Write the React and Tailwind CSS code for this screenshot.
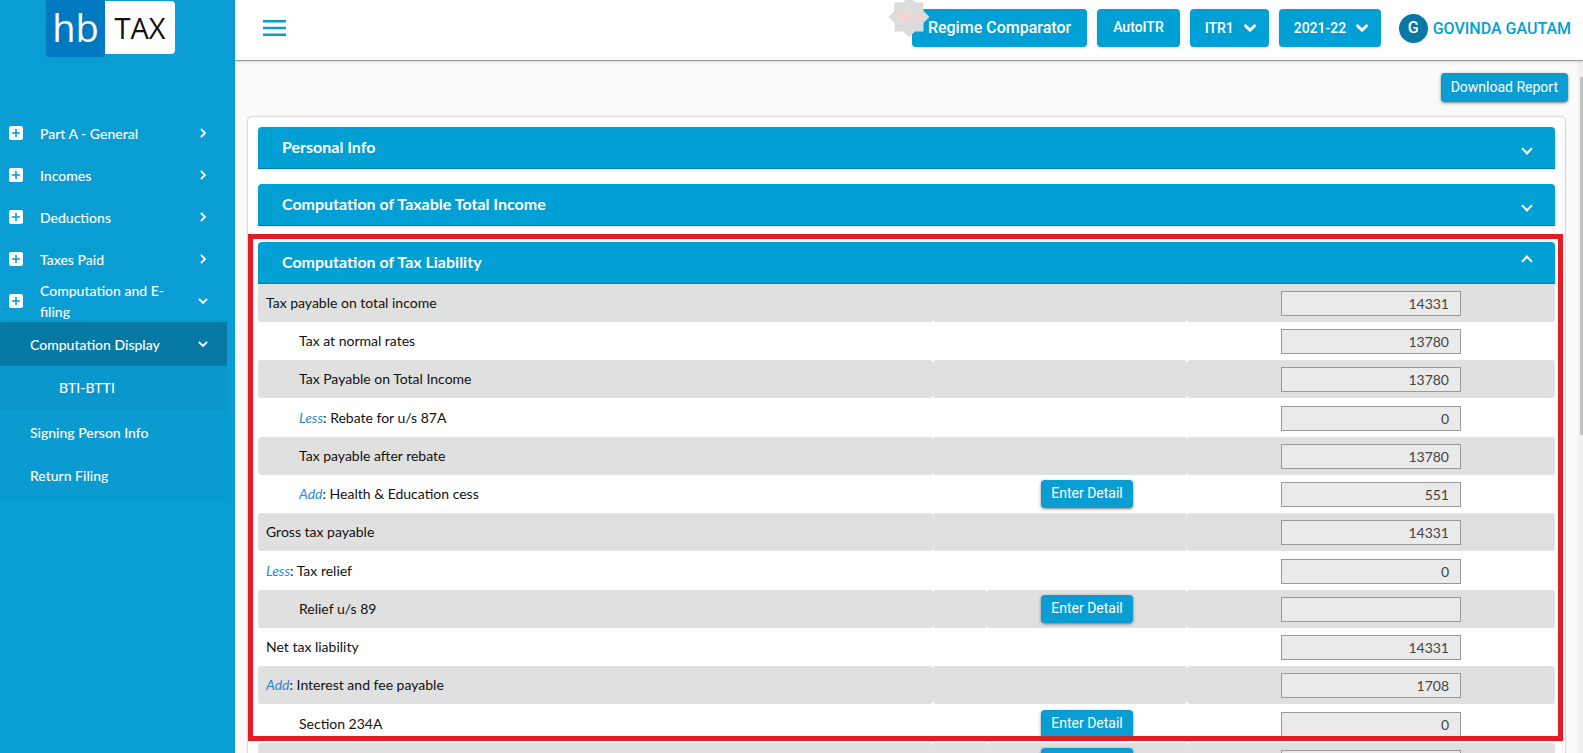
import { useState } from "react";
import { ChevronDown } from "lucide-react";

const menu = [
  { label: "Part A - General" },
  { label: "Incomes" },
  { label: "Deductions" },
  { label: "Taxes Paid" },
  { label: "Computation and E-filing", open: true },
];

const rows = [
  { id: "total", label: "Tax payable on total income", value: "14331" },
  { id: "normal", label: "Tax at normal rates", value: "13780", indent: true },
  { id: "payable", label: "Tax Payable on Total Income", value: "13780", indent: true },
  { id: "rebate", prefix: "Less", label: "Rebate for u/s 87A", value: "0", indent: true },
  { id: "after", label: "Tax payable after rebate", value: "13780", indent: true },
  { id: "cess", prefix: "Add", label: "Health & Education cess", value: "551", indent: true, detail: true },
  { id: "gross", label: "Gross tax payable", value: "14331" },
  { id: "relief", prefix: "Less", label: "Tax relief", value: "0" },
  { id: "relief89", label: "Relief u/s 89", value: "", indent: true, detail: true },
  { id: "net", label: "Net tax liability", value: "14331" },
  { id: "interest", prefix: "Add", label: "Interest and fee payable", value: "1708" },
  { id: "s234a", label: "Section 234A", value: "0", indent: true, detail: true },
  { id: "s234b", label: "Section 234B", value: "0", indent: true, detail: true },
];

function PlusBox() {
  return (
    <svg viewBox="0 0 14 14" className="size-3.5 shrink-0" aria-hidden="true">
      <rect width="14" height="14" rx="2" fill="#fff" />
      <path d="M7 3v8M3 7h8" stroke="#0a9dd3" strokeWidth="1.6" />
    </svg>
  );
}

function MenuChevron({ open }) {
  return (
    <svg
      viewBox="0 0 10 10"
      className="size-2.5 shrink-0"
      fill="none"
      stroke="currentColor"
      strokeWidth="1.8"
      aria-hidden="true"
    >
      <path d={open ? "M1 3l4 4 4-4" : "M3 1l4 4-4 4"} />
    </svg>
  );
}

function Logo() {
  return (
    <div className="ml-[46px] flex h-[57px] items-start">
      <div className="flex h-[57px] w-[59px] items-center justify-center rounded-bl-xs bg-[#0079c1] pb-1 font-['Open_Sans',sans-serif] text-[38px] leading-none font-medium text-white">
        hb
      </div>
      <div className="mt-px flex h-[53px] w-[70px] items-center justify-center rounded-r-sm bg-white pb-px font-['Open_Sans',sans-serif] text-[29px] leading-none text-[#111]">
        TAX
      </div>
    </div>
  );
}

function Sidebar() {
  return (
    <aside className="w-[235px] shrink-0 bg-[#0a9dd3] text-white">
      <Logo />
      <nav className="mt-[55px] w-[227px] text-sm leading-[21px] font-medium">
        {menu.map((item) => (
          <a
            key={item.label}
            href="#"
            className="flex h-[42px] items-center pr-[19px] pl-[9px]"
          >
            <PlusBox />
            <span className="ml-[17px] flex-1 pr-6">{item.label}</span>
            <MenuChevron open={item.open} />
          </a>
        ))}
        <a
          href="#"
          className="flex h-11 items-center justify-between bg-[#0779a3] pr-[19px] pl-[30px]"
        >
          Computation Display
          <MenuChevron open />
        </a>
        <a
          href="#"
          className="flex h-11 items-center border-b border-[#0a92c5] bg-[#0a97cc] pl-[59px]"
        >
          BTI-BTTI
        </a>
        <a href="#" className="flex h-11 items-center bg-[#0a9bd0] pl-[30px]">
          Signing Person Info
        </a>
        <a
          href="#"
          className="flex h-11 items-center border-b border-[#0a92c5] bg-[#0a9bd0] pl-[30px]"
        >
          Return Filing
        </a>
      </nav>
    </aside>
  );
}

function HeaderSelect({ label, value }) {
  return (
    <div className="relative">
      <select
        aria-label={label}
        defaultValue={value}
        className="h-[38px] appearance-none rounded-sm bg-[#00a0d4] pr-[34px] pl-[15px] text-sm font-medium text-white shadow-sm"
      >
        <option>{value}</option>
      </select>
      <ChevronDown
        strokeWidth={4}
        className="pointer-events-none absolute top-2.5 right-2.5 size-[18px] text-white"
      />
    </div>
  );
}

function NewBadge() {
  return (
    <svg
      viewBox="-21 -21 42 42"
      className="absolute -top-[13px] -left-6 size-[42px]"
      aria-hidden="true"
    >
      <rect x="-14.5" y="-14.5" width="29" height="29" fill="#dcdcdc" />
      <rect x="-14.5" y="-14.5" width="29" height="29" fill="#dcdcdc" transform="rotate(45)" />
      <text
        y="4"
        textAnchor="middle"
        fontSize="12"
        fontWeight="700"
        fontFamily="Liberation Sans, sans-serif"
        fill="#fbd0d0"
      >
        New
      </text>
    </svg>
  );
}

function Header() {
  return (
    <header className="relative z-10 flex h-[61px] shrink-0 items-start justify-between border-b border-[#999] bg-white pt-[9px] pr-3 pl-7 font-[Roboto,sans-serif] shadow-sm">
      <button type="button" aria-label="Toggle menu" className="mt-[11px]">
        <svg viewBox="0 0 23 16" className="h-4 w-[23px]" aria-hidden="true">
          <path
            d="M0 1.3h23M0 8h23M0 14.7h23"
            stroke="#0a9dc8"
            strokeWidth="2.6"
          />
        </svg>
      </button>
      <div className="flex items-start gap-2.5">
        <div className="relative">
          <button
            type="button"
            className="h-[38px] rounded-sm bg-[#00a0d4] px-4 text-base font-medium text-white shadow-sm"
          >
            Regime Comparator
          </button>
          <NewBadge />
        </div>
        <button
          type="button"
          className="h-[38px] rounded-sm bg-[#00a0d4] px-4 pb-0.5 text-sm font-medium text-white shadow-sm"
        >
          AutoITR
        </button>
        <HeaderSelect label="Form" value="ITR1" />
        <HeaderSelect label="Assessment year" value="2021-22" />
        <div className="ml-2 flex h-[38px] items-center gap-[5px]">
          <span className="flex size-[29px] items-center justify-center rounded-full bg-[#0779a3] text-base font-medium text-white">
            G
          </span>
          <span className="pt-0.5 text-base font-medium text-[#00a0d4]">
            GOVINDA GAUTAM
          </span>
        </div>
      </div>
    </header>
  );
}

function PanelHeader({ title, open, onClick }) {
  return (
    <button
      type="button"
      onClick={onClick}
      aria-expanded={open}
      className="flex h-[42px] w-full items-center justify-between rounded-t-sm border-b border-[#0779a3] bg-[#00a0d4] px-6 text-left text-base font-bold text-white shadow-sm"
    >
      <span className="pb-0.5">{title}</span>
      <span
        className={`size-2 border-r-2 border-b-2 border-white ${open ? "mb-1 rotate-225" : "mt-0.5 rotate-45"}`}
      />
    </button>
  );
}

function ActionButton({ children, className }) {
  return (
    <button
      type="button"
      className={`rounded-sm bg-[#0a9dd3] px-2.5 pb-0.5 align-middle font-[Roboto,sans-serif] text-sm leading-none text-white shadow-[0_1px_3px_rgba(0,0,0,0.5)] ${className}`}
    >
      {children}
    </button>
  );
}

function LiabilityTable() {
  return (
    <table className="w-full table-fixed border-separate border-spacing-0 text-sm text-[#111]">
      <colgroup>
        <col />
        <col className="w-[54px]" />
        <col className="w-[200px]" />
        <col className="w-[368px]" />
      </colgroup>
      <tbody>
        {rows.map((row) => (
          <tr
            key={row.id}
            className="h-[38px] nth-[4n]:h-[39px] odd:[&>td]:bg-[#e0e0e0]"
          >
            <td
              className={`rounded-[3px] p-0 ${row.indent ? "pl-[41px]" : "pl-2"}`}
            >
              <label htmlFor={row.id}>
                {row.prefix && <i className="text-[#1e88d8]">{row.prefix}</i>}
                {row.prefix && ": "}
                {row.label}
              </label>
            </td>
            {row.detail ? (
              <>
                <td className="rounded-[3px] p-0" />
                <td className="rounded-[3px] p-0 text-center leading-none">
                  <ActionButton className="h-7">Enter Detail</ActionButton>
                </td>
              </>
            ) : (
              <td colSpan={2} className="rounded-[3px] p-0" />
            )}
            <td className="rounded-[3px] p-0 pt-px text-center leading-none">
              <input
                id={row.id}
                type="text"
                readOnly
                value={row.value}
                className="h-[25px] w-[180px] border border-[#999] bg-[#eaeaea] px-[11px] text-right align-middle text-sm text-[#444]"
              />
            </td>
          </tr>
        ))}
      </tbody>
    </table>
  );
}

export default function App() {
  const [open, setOpen] = useState("liability");
  const toggle = (name) => setOpen(open === name ? "" : name);

  return (
    <div className="flex h-screen overflow-hidden bg-[#fafafa] font-[Lato,sans-serif]">
      <Sidebar />
      <div className="flex min-w-0 flex-1 flex-col">
        <Header />
        <div className="flex min-h-0 flex-1">
          <main className="min-w-0 flex-1 overflow-hidden px-[13px] pt-3">
            <div className="-mr-[3px] flex justify-end">
              <ActionButton className="h-[29px]">Download Report</ActionButton>
            </div>
            <div className="mt-[15px] rounded-sm bg-white p-2.5 shadow-[0_0_2px_rgba(0,0,0,0.45)]">
              <PanelHeader
                title="Personal Info"
                open={open === "personal"}
                onClick={() => toggle("personal")}
              />
              <div className="mt-[15px]">
                <PanelHeader
                  title="Computation of Taxable Total Income"
                  open={open === "income"}
                  onClick={() => toggle("income")}
                />
              </div>
              <section className="relative mt-4">
                <PanelHeader
                  title="Computation of Tax Liability"
                  open={open === "liability"}
                  onClick={() => toggle("liability")}
                />
                {open === "liability" && <LiabilityTable />}
                <div className="pointer-events-none absolute -top-2 -right-2 -left-2.5 h-[507px] border-5 border-[#e51c24]" />
              </section>
            </div>
          </main>
          <div className="w-[5px] bg-[#f1f1f1] pt-4 pl-0.5">
            <div className="h-[53%] bg-[#c1c1c1]" />
          </div>
        </div>
      </div>
    </div>
  );
}
